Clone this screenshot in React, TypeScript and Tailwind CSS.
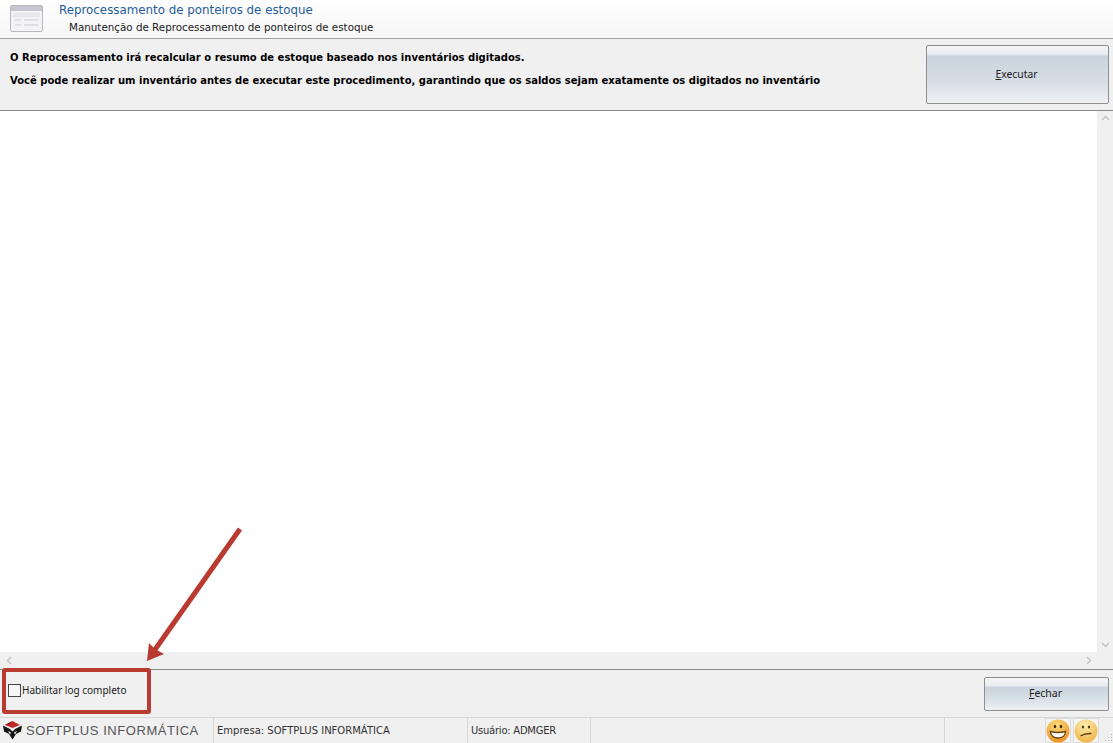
function Scroll({ d, w, h }: { d: string; w: number; h: number }) {
  return (
    <svg width={w} height={h} viewBox={`0 0 ${w} ${h}`}>
      <path d={d} fill="none" stroke="#c4c4c4" strokeWidth="1.5" />
    </svg>
  );
}

export default function App() {
  return (
    <div className="relative flex h-[743px] w-[1113px] flex-col overflow-hidden bg-[#f0f0f0] text-black [font-family:'DejaVu_Sans',sans-serif]">
      <header className="flex h-[39px] shrink-0 border-b border-[#a0a0a0] bg-gradient-to-b from-[#ffffff] to-[#f6f6f6]">
        <div className="flex w-[59px] shrink-0 pl-[10px] pt-[5px]">
          <svg width="33" height="27" viewBox="0 0 33 27">
            <rect x="0.5" y="0.5" width="32" height="26" rx="1.5" fill="#f3f3f6" stroke="#b8b8be" />
            <rect x="1" y="1" width="31" height="5" fill="#c6c6d0" />
            <rect x="3" y="8" width="27" height="4" fill="#e6e6ec" />
            <path d="M5 15h6M14 15h14M5 20h6M14 20h14" stroke="#cbcbd0" strokeWidth="1" />
          </svg>
        </div>
        <div className="flex flex-col">
          <div className="pt-[3px] text-[11.85px] leading-[15px] text-[#1f5c99]">Reprocessamento de ponteiros de estoque</div>
          <div className="pl-[10px] pt-[3px] text-[10.33px] leading-[13px] text-[#202020]">Manutenção de Reprocessamento de ponteiros de estoque</div>
        </div>
      </header>

      <section className="flex h-[72px] shrink-0 justify-between border-b border-[#8a8a8a] bg-[#f0f0f0] pl-[10px]">
        <div className="flex flex-col gap-[10px] pt-[12px] text-[10px] font-bold leading-[13px]">
          <div>O Reprocessamento irá recalcular o resumo de estoque baseado nos inventários digitados.</div>
          <div>Você pode realizar um inventário antes de executar este procedimento, garantindo que os saldos sejam exatamente os digitados no inventário</div>
        </div>
        <button className="mr-[4px] mt-[6px] flex h-[59px] w-[183px] items-center justify-center rounded-[2px] border border-[#8f8f8f] bg-[linear-gradient(#f4f6f8_0%,#e8ecf0_14%,#c9d4de_18%,#d5dde5_60%,#eef0f3_100%)] pr-[2px] pt-[1px] text-[10.3px] text-[#202020] [font-family:'Noto_Sans',sans-serif]">
          <span><span className="underline">E</span>xecutar</span>
        </button>
      </section>

      <main className="flex min-h-0 flex-1 flex-col">
        <div className="flex min-h-0 flex-1">
          <div className="flex-1 bg-white" />
          <div className="flex w-[16px] shrink-0 flex-col items-center justify-between bg-[#f0f0f0] py-[4px]">
            <Scroll w={9} h={6} d="M1 5l3.500-3.500L8 5" />
            <Scroll w={9} h={6} d="M1 1l3.500 3.500L8 1" />
          </div>
        </div>
        <div className="flex h-[17px] shrink-0 items-center justify-between bg-[#f0f0f0] pl-[6px] pr-[21px]">
          <Scroll w={6} h={9} d="M5 1L1.500 4.500 5 8" />
          <Scroll w={6} h={9} d="M1 1l3.500 3.500L1 8" />
        </div>
      </main>

      <section className="flex h-[49px] shrink-0 items-center justify-between border-y border-t-[#8a8a8a] border-b-[#d8d8d8] pl-[8px] pr-[4px] [font-family:'Noto_Sans',sans-serif]">
        <label className="mb-[6px] flex items-center gap-[1px] text-[10px] text-[#202020]">
          <span className="h-[13px] w-[13px] border border-[#444444] bg-[#f6f6f6]" />
          Habilitar log completo
        </label>
        <button className="flex h-[34px] w-[125px] items-center justify-center rounded-[2px] border border-[#8f8f8f] bg-[linear-gradient(#f4f6f8_0%,#e8ecf0_24%,#c9d4de_30%,#d5dde5_60%,#eef0f3_100%)] pr-[2px] pt-[1px] text-[10.5px] text-[#202020]">
          <span><span className="underline">F</span>echar</span>
        </button>
      </section>

      <footer className="flex h-[25px] shrink-0 items-center text-[10px] text-[#303030]">
        <div className="flex h-full w-[213px] shrink-0 items-center pl-[2px]">
          <svg width="21" height="21" viewBox="0 0 21 21">
            <path d="M10.500 1L18 5l-7.500 3L3 5z" fill="#c62828" />
            <path d="M10.500 1L3 5l4-.5z" fill="#7a1414" />
            <path d="M1 5.500l7 3.500 2.500 2.500L13 9l7-3.500-1 6-5 2.500-3.500 5.500L7 14l-5-2.500z" fill="#151515" />
            <path d="M6 11l3 1.500-1 2zM15 11l-3 1.500 1 2z" fill="#f0f0f0" />
          </svg>
          <span className="ml-[3px] whitespace-nowrap text-[13px] tracking-[0.55px] text-[#555555] [font-family:'Liberation_Sans',sans-serif]">SOFTPLUS INFORMÁTICA</span>
        </div>
        <div className="flex h-full w-[254px] shrink-0 items-center border-l border-[#d8d8d8] pl-[3px]">Empresa: SOFTPLUS INFORMÁTICA</div>
        <div className="flex h-full w-[123px] shrink-0 items-center border-l border-[#d8d8d8] pl-[3px] tracking-[-0.25px]">Usuário: ADMGER</div>
        <div className="h-full w-[354px] shrink-0 border-l border-[#d8d8d8]" />
        <div className="h-full w-[101px] shrink-0 border-l border-[#d8d8d8]" />
        <div className="flex h-full items-center gap-[2px]">
          <svg width="26" height="25" viewBox="0 0 26 25">
            <defs>
              <radialGradient id="s1" cx="45%" cy="25%" r="80%"><stop offset="0%" stopColor="#fbdc7c" /><stop offset="100%" stopColor="#e98f1c" /></radialGradient>
            </defs>
            <rect x="0.5" y="0.5" width="25" height="24" fill="#f4f4f4" stroke="#dcdcdc" />
            <circle cx="13" cy="13" r="11.500" fill="url(#s1)" />
            <ellipse cx="10" cy="8.500" rx="1.300" ry="1.800" fill="#4a3010" />
            <ellipse cx="16" cy="8.500" rx="1.300" ry="1.800" fill="#4a3010" />
            <path d="M5.500 13.500c4.500 1.200 10.500 1.200 15 0c0 4-3.200 6.500-7.500 6.500s-7.500-2.500-7.500-6.500z" fill="#fff" stroke="#6b4413" strokeWidth="1.400" />
          </svg>
          <svg width="26" height="25" viewBox="0 0 26 25">
            <defs>
              <radialGradient id="s2" cx="45%" cy="25%" r="80%"><stop offset="0%" stopColor="#fdeeb0" /><stop offset="100%" stopColor="#efb040" /></radialGradient>
            </defs>
            <rect x="0.5" y="0.5" width="25" height="24" fill="#f4f4f4" stroke="#dcdcdc" />
            <circle cx="13" cy="13" r="11.500" fill="url(#s2)" />
            <ellipse cx="10" cy="9" rx="1.200" ry="1.600" fill="#5b3a10" />
            <ellipse cx="16" cy="9" rx="1.200" ry="1.600" fill="#5b3a10" />
            <path d="M7.500 18c3-2 6.500-2.800 11-2.500" fill="none" stroke="#5b3a10" strokeWidth="1.400" />
          </svg>
          <svg className="ml-[1px] self-end" width="12" height="10" viewBox="0 0 12 10">
            <path d="M9 1h1v1H9zM6 4h1v1H6zM9 4h1v1H9zM3 7h1v1H3zM6 7h1v1H6zM9 7h1v1H9z" fill="#b5b5b5" />
          </svg>
        </div>
      </footer>

      <div className="pointer-events-none absolute left-[2px] top-[668px] h-[46px] w-[149px] rounded-[3px] border-[4px] border-[#b93a2f]" />
      <svg className="pointer-events-none absolute left-0 top-0" width="1113" height="743" viewBox="0 0 1113 743">
        <path d="M240 529L154 651" stroke="#b93a2f" strokeWidth="5" fill="none" />
        <path d="M147 661L149 643L155 649L164 654z" fill="#b93a2f" />
      </svg>
    </div>
  );
}
